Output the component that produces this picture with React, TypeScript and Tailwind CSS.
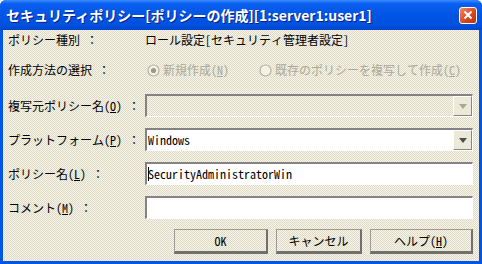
const checker =
  "bg-[repeating-conic-gradient(#dedac6_0_25%,#f7f5ea_0_50%)] [background-size:2px_2px]";
const jp = "[font-family:'Noto_Sans_Mono_CJK_JP','Noto_Sans_CJK_JP',monospace]";

function Label({ children }: { children: React.ReactNode }) {
  return <div className="w-[137px] shrink-0 text-[12px] leading-none text-black">{children}</div>;
}

function Arrow({ disabled }: { disabled?: boolean }) {
  return (
    <div className="w-[19px] h-full flex items-center justify-center border-t border-l border-t-white border-l-white border-b border-r border-b-[#8a8778] border-r-[#8a8778] bg-[#ece9d8]">
      <svg width="8" height="5" viewBox="0 0 8 5">
        <path d="M0 0H8L4 5Z" fill={disabled ? "#a9a697" : "#4d4d4d"} />
      </svg>
    </div>
  );
}

function Inset({ children, white = true }: { children?: React.ReactNode; white?: boolean }) {
  return (
    <div
      className={`flex-1 h-[23px] flex items-stretch border-t-2 border-l-2 border-t-[#848284] border-l-[#848284] border-b border-r border-b-white border-r-white ${
        white ? "bg-white" : checker
      }`}
    >
      {children}
    </div>
  );
}

function Radio({ checked }: { checked?: boolean }) {
  return (
    <svg width="13" height="13" viewBox="0 0 13 13" className="shrink-0">
      <circle cx="6.5" cy="6.5" r="5.5" fill="#f4f2e8" stroke="#b3b0a2" strokeWidth="1.2" />
      {checked && <circle cx="6.5" cy="6.5" r="2.6" fill="#9c998a" />}
    </svg>
  );
}

function Btn({ children }: { children: React.ReactNode }) {
  return (
    <div
      className={`h-[25px] flex items-center justify-center text-[12px] text-black border-t border-l border-t-[#9a9a9a] border-l-[#9a9a9a] border-b-[3px] border-r-2 border-b-[#707070] border-r-[#707070] ${checker}`}
    >
      {children}
    </div>
  );
}

export default function App() {
  return (
    <div className={`w-[482px] h-[264px] flex flex-col bg-[#0055e5] rounded-t-[6px] overflow-hidden ${jp}`}>
      <div className="h-[30px] shrink-0 flex items-center justify-between pl-[6px] pr-[5px] bg-[linear-gradient(#3b8cff_0%,#0a5ff0_12%,#0055e5_50%,#0050de_85%,#0044c8_100%)]">
        <span className="text-white text-[14px] font-bold leading-none [font-family:'Noto_Sans_CJK_JP',sans-serif] [text-shadow:1px_1px_0_#0a1e8c]">
          セキュリティポリシー[ポリシーの作成][1:server1:user1]
        </span>
        <div className="w-[18px] h-[17px] rounded-[3px] border border-white bg-[linear-gradient(135deg,#f08a6c,#d8431c_60%,#c03010)] flex items-center justify-center">
          <svg width="10" height="10" viewBox="0 0 10 10">
            <path d="M1.5 1.5L8.5 8.5M8.5 1.5L1.5 8.5" stroke="white" strokeWidth="2" />
          </svg>
        </div>
      </div>

      <div className={`flex-1 mx-[3px] mb-[3px] pl-[5px] pr-[6px] flex flex-col ${checker}`}>
        <div className="h-[18px] mt-[1px] flex items-center">
          <Label>ポリシー種別 ：</Label>
          <span className="text-[12px] leading-none text-black">ロール設定[セキュリティ管理者設定]</span>
        </div>

        <div className="h-[18px] mt-[12px] flex items-center">
          <Label>作成方法の選択 ：</Label>
          <div className="flex items-center gap-[3px] ml-[2px] text-[12px] leading-none text-[#aca899]">
            <Radio checked />
            <span>
              新規作成(<u>N</u>)
            </span>
          </div>
          <div className="flex items-center gap-[3px] ml-[30px] text-[12px] leading-none text-[#aca899]">
            <Radio />
            <span>
              既存のポリシーを複写して作成(<u>C</u>)
            </span>
          </div>
        </div>

        <div className="h-[23px] mt-[15px] flex items-center">
          <Label>
            複写元ポリシー名(<u>O</u>) ：
          </Label>
          <Inset white={false}>
            <div className="flex-1" />
            <Arrow disabled />
          </Inset>
        </div>

        <div className="h-[23px] mt-[11px] flex items-center">
          <Label>
            プラットフォーム(<u>P</u>) ：
          </Label>
          <Inset>
            <div className="flex-1 flex items-center pl-[1px] text-[12px] leading-none text-black">Windows</div>
            <Arrow />
          </Inset>
        </div>

        <div className="h-[23px] mt-[11px] flex items-center">
          <Label>
            ポリシー名(<u>L</u>) ：
          </Label>
          <Inset>
            <div className="flex-1 flex items-center pl-[1px] text-[12px] leading-none text-black">
              <span className="w-px h-[14px] bg-black -mr-px" />
              SecurityAdministratorWin
            </div>
          </Inset>
        </div>

        <div className="h-[23px] mt-[11px] flex items-center">
          <Label>
            コメント(<u>M</u>) ：
          </Label>
          <Inset />
        </div>

        <div className="mt-[10px] flex justify-end gap-[8px]">
          <div className="w-[94px]">
            <Btn>OK</Btn>
          </div>
          <div className="w-[86px]">
            <Btn>キャンセル</Btn>
          </div>
          <div className="w-[103px]">
            <Btn>
              ヘルプ(<u>H</u>)
            </Btn>
          </div>
        </div>
      </div>
    </div>
  );
}
